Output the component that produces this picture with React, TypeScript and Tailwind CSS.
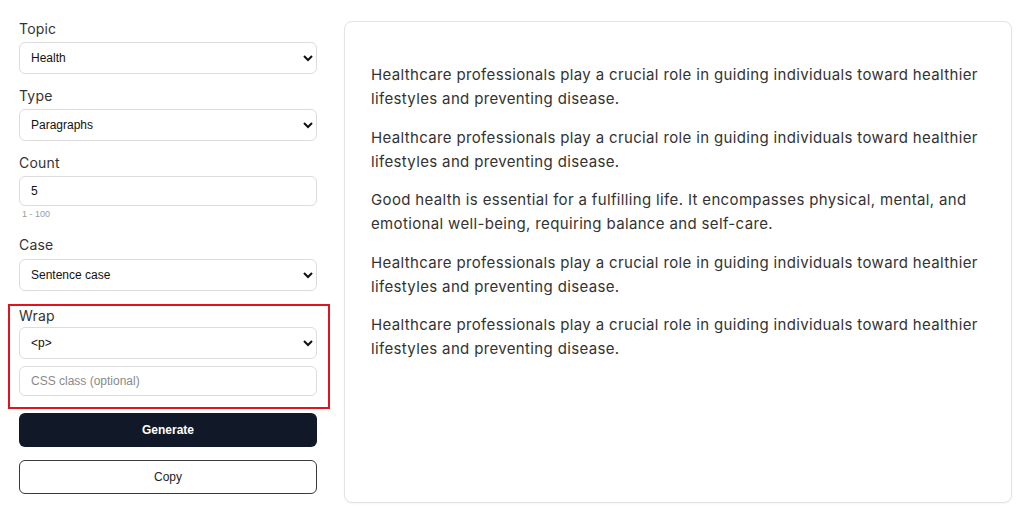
import React from "react";

const paragraphs = [
  "Healthcare professionals play a crucial role in guiding individuals toward healthier lifestyles and preventing disease.",
  "Healthcare professionals play a crucial role in guiding individuals toward healthier lifestyles and preventing disease.",
  "Good health is essential for a fulfilling life. It encompasses physical, mental, and emotional well-being, requiring balance and self-care.",
  "Healthcare professionals play a crucial role in guiding individuals toward healthier lifestyles and preventing disease.",
  "Healthcare professionals play a crucial role in guiding individuals toward healthier lifestyles and preventing disease.",
];

const labelCls =
  "block h-[20px] leading-[20px] text-[14px] text-[#333] font-['Inter',sans-serif] tracking-[0.2px]";
const selectCls =
  "block w-full h-[32px] rounded-[6px] border border-[#dcdcdc] bg-white pl-[7px] pr-[6px] text-[12px] text-[#111] font-['Liberation_Sans',Arial,sans-serif] outline-none";
const inputCls =
  "block w-full h-[30px] rounded-[6px] border border-[#dcdcdc] bg-white px-[11px] text-[12px] text-[#111] font-['Liberation_Sans',Arial,sans-serif] outline-none placeholder:text-[#8a8a8a]";

export default function App() {
  return (
    <div className="w-[1024px] h-[527px] bg-white flex pl-[19px] pt-[19px]">
      <div className="w-[298px] flex flex-col">
        <label className={labelCls}>Topic</label>
        <select className={`${selectCls} mt-[3px]`} defaultValue="Health">
          <option>Health</option>
        </select>

        <label className={`${labelCls} mt-[12px]`}>Type</label>
        <select className={`${selectCls} mt-[3px]`} defaultValue="Paragraphs">
          <option>Paragraphs</option>
        </select>

        <label className={`${labelCls} mt-[12px]`}>Count</label>
        <input className={`${inputCls} mt-[3px]`} defaultValue="5" />
        <div className="mt-[2px] pl-[3px] h-[12px] leading-[12px] text-[9px] text-[#9a9a9a] font-['Liberation_Sans',Arial,sans-serif]">
          1 - 100
        </div>

        <label className={`${labelCls} mt-[15px]`}>Case</label>
        <select className={`${selectCls} mt-[4px]`} defaultValue="Sentence case">
          <option>Sentence case</option>
        </select>

        <div className="mt-[13px] ml-[-11px] mr-[-13px] pl-[9px] pr-[11px] pb-[11px] border-2 border-[#e0141e]">
          <label className={labelCls}>Wrap</label>
          <select className={`${selectCls} mt-[1px]`} defaultValue="p">
            <option value="p">&lt;p&gt;</option>
          </select>
          <input className={`${inputCls} mt-[7px]`} placeholder="CSS class (optional)" />
        </div>

        <button className="mt-[4px] h-[34px] w-full rounded-[6px] bg-[#111827] text-white text-[12px] font-bold font-['Liberation_Sans',Arial,sans-serif]">
          Generate
        </button>
        <button className="mt-[13px] h-[34px] w-full rounded-[6px] border border-[#3a3a3a] bg-white text-[#222] text-[12px] font-['Liberation_Sans',Arial,sans-serif]">
          Copy
        </button>
      </div>

      <div className="ml-[27px] mt-[2px] w-[668px] h-[482px] rounded-[8px] border border-[#e3e3e3] bg-white pt-[41px] pl-[26px] pr-[30px] shadow-[0_1px_2px_rgba(0,0,0,0.04)]">
        {paragraphs.map((p, i) => (
          <p
            key={i}
            className="mb-[14.5px] text-[15px] leading-[24px] text-[#333] font-['Inter',sans-serif] tracking-[0.35px]"
          >
            {p}
          </p>
        ))}
      </div>
    </div>
  );
}
